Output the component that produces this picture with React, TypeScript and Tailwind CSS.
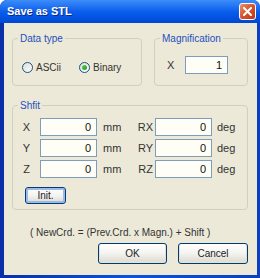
import React from "react";

const font = { fontFamily: '"Liberation Sans", Tahoma, sans-serif' };

function Radio({ checked, label }: { checked?: boolean; label: string }) {
  return (
    <label className="flex items-center gap-[3px]">
      <span className="w-[11px] h-[11px] rounded-full border border-[#1C5180] bg-gradient-to-br from-[#DCDCD7] to-white flex items-center justify-center">
        {checked && (
          <span className="w-[5px] h-[5px] rounded-full bg-gradient-to-br from-[#55D451] to-[#1A9C16]" />
        )}
      </span>
      <span>{label}</span>
    </label>
  );
}

function Field({ value, w }: { value: string; w: string }) {
  return (
    <div
      className={`${w} h-[18px] border border-[#7F9DB9] bg-[#FFFEF6] flex items-center justify-end pr-[5px] text-[#111] text-[11px]`}
    >
      {value}
    </div>
  );
}

function XpButton({ children, w, h, focus }: { children: React.ReactNode; w: string; h: string; focus?: boolean }) {
  return (
    <button
      type="button"
      className={`${w} ${h} rounded-[3px] border border-[#003C74] bg-gradient-to-b from-white via-[#F3F3EF] to-[#DCD8CC] text-[#222] flex items-center justify-center ${
        focus ? "shadow-[inset_0_0_0_2px_#9DB9EB]" : "shadow-[inset_0_-1px_0_1px_#E3E0D6]"
      }`}
    >
      {children}
    </button>
  );
}

function Group({ title, className, children }: { title: string; className: string; children: React.ReactNode }) {
  return (
    <fieldset className={`border border-[#D0D0BF] rounded-[4px] ${className}`}>
      <legend className="ml-[5px] px-[2px] text-[#1E4FC0] leading-[13px]">{title}</legend>
      {children}
    </fieldset>
  );
}

export default function App() {
  return (
    <div
      style={font}
      className="w-[260px] h-[278px] flex flex-col bg-gradient-to-r from-[#0A2FA8] via-[#0A52E0] to-[#0A3FC0] rounded-t-[7px] overflow-hidden text-[10px] text-[#333]"
    >
      <div className="h-[23px] shrink-0 flex items-center justify-between pl-[7px] pr-[4px] bg-gradient-to-b from-[#3C8CF8] via-[#0A5EEC] to-[#0047D6]">
        <span className="text-white font-bold text-[11px] [text-shadow:1px_1px_0_#0A2A88]">Save as STL</span>
        <div className="w-[17px] h-[17px] rounded-[3px] border border-white bg-gradient-to-br from-[#E8906E] via-[#D6512B] to-[#B93A18] flex items-center justify-center">
          <svg width="9" height="9" viewBox="0 0 9 9">
            <path d="M1 1 L8 8 M8 1 L1 8" stroke="white" strokeWidth="2" strokeLinecap="square" />
          </svg>
        </div>
      </div>

      <div className="flex-1 ml-[4px] mr-[3px] mb-[3px] bg-[#ECE9D8] pl-[8px] pr-[9px] pt-[9px] flex flex-col">
        <div className="flex justify-between">
          <Group title="Data type" className="w-[130px] h-[54px]">
            <div className="flex items-center gap-[18px] pl-[9px] pt-[15px]">
              <Radio label="ASCii" />
              <Radio checked label="Binary" />
            </div>
          </Group>
          <Group title="Magnification" className="w-[94px] h-[54px]">
            <div className="flex items-center pl-[12px] pt-[11px]">
              <span className="w-[18px] text-[11px]">X</span>
              <Field value="1" w="w-[43px]" />
            </div>
          </Group>
        </div>

        <Group title="Shfit" className="mt-[13px] h-[111px]">
          <div className="flex flex-col gap-[3px] pt-[6px] text-[11px]">
            {[
              ["X", "RX"],
              ["Y", "RY"],
              ["Z", "RZ"],
            ].map(([a, b]) => (
              <div key={a} className="flex items-center">
                <span className="w-[27px] text-center">{a}</span>
                <Field value="0" w="w-[57px]" />
                <span className="w-[33px] pl-[6px]">mm</span>
                <span className="w-[25px] text-right pr-[2px]">{b}</span>
                <Field value="0" w="w-[57px]" />
                <span className="pl-[5px]">deg</span>
              </div>
            ))}
          </div>
          <div className="pl-[12px] pt-[9px]">
            <XpButton w="w-[41px]" h="h-[17px]" focus>
              Init.
            </XpButton>
          </div>
        </Group>

        <div className="pl-[18px] pt-[16px] leading-[13px]">( NewCrd. = (Prev.Crd. x Magn.) + Shift )</div>

        <div className="flex justify-end gap-[11px] pt-[4px]">
          <XpButton w="w-[69px]" h="h-[21px]">OK</XpButton>
          <XpButton w="w-[70px]" h="h-[21px]">Cancel</XpButton>
        </div>
      </div>
    </div>
  );
}
